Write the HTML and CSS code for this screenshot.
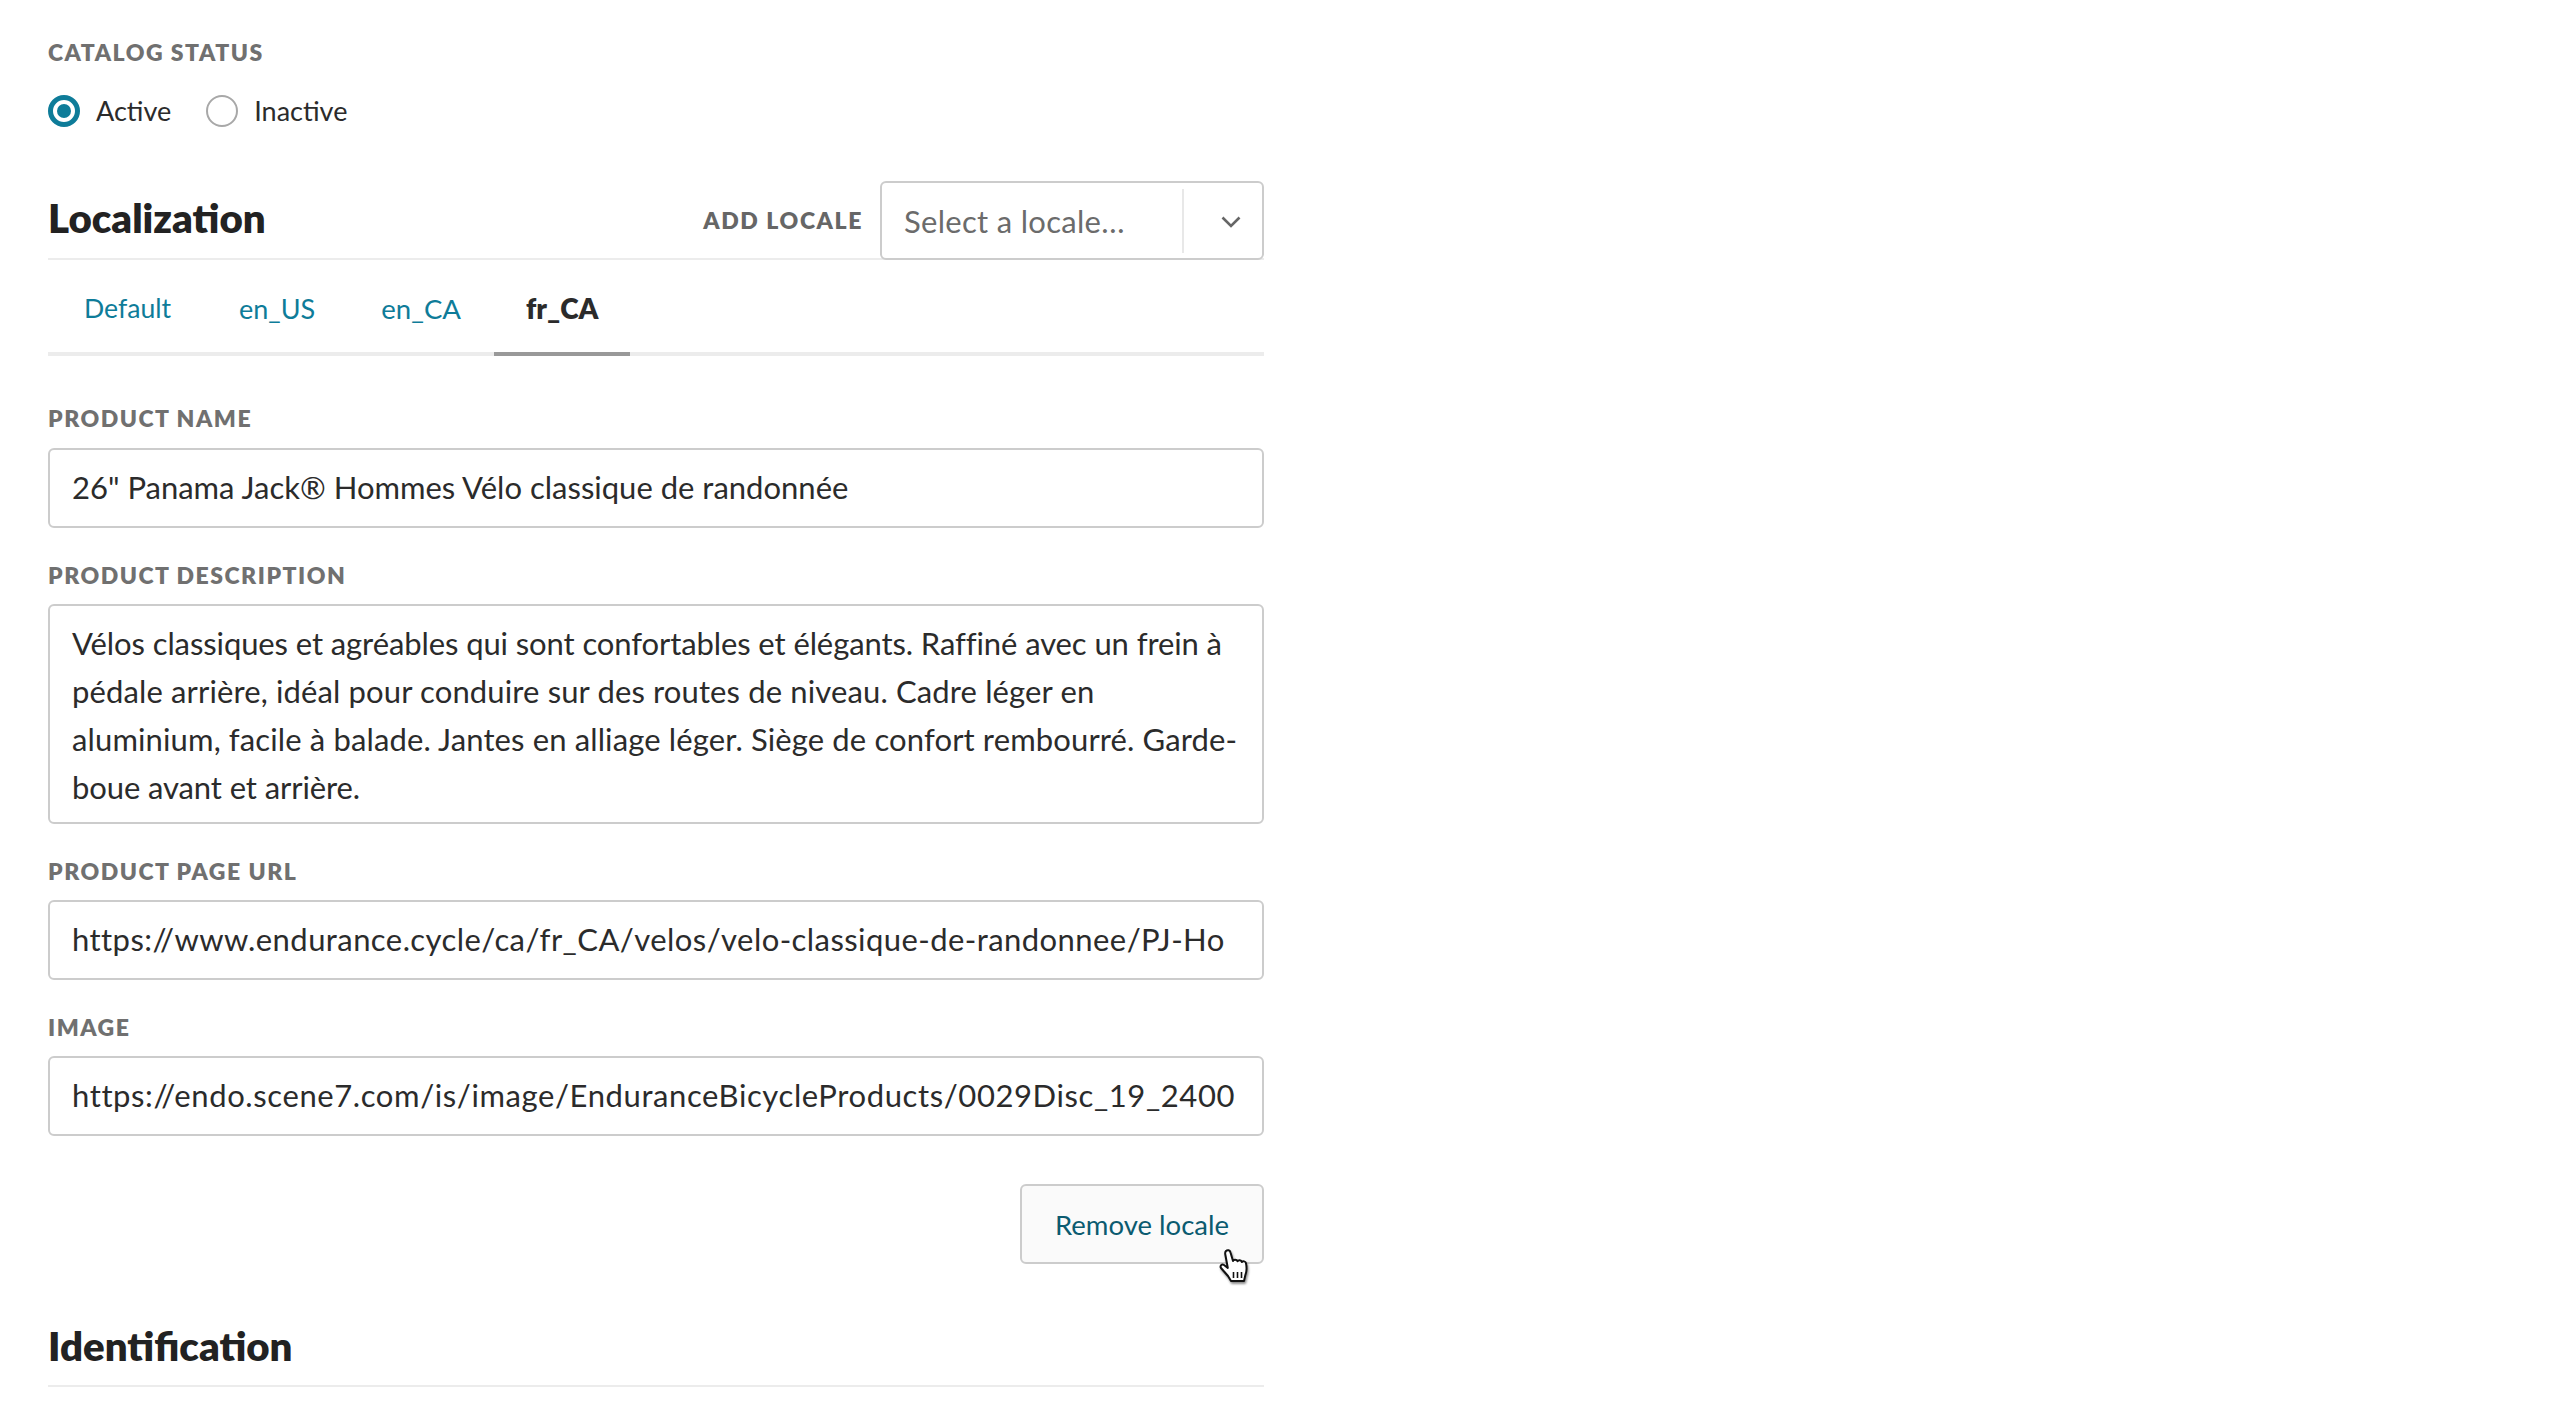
FILE: index.html
```html
<!DOCTYPE html>
<html lang="fr">
<head>
<meta charset="utf-8">
<title>Catalog</title>
<link rel="stylesheet" href="styles.css">
</head>
<body>
<main class="page">
  <div class="label status-label">CATALOG STATUS</div>
  <div class="radios">
    <div class="radio-item"><span class="radio on"></span><span>Active</span></div>
    <div class="radio-item"><span class="radio"></span><span>Inactive</span></div>
  </div>
  <header class="section-head loc-head">
    <h2>Localization</h2>
    <div class="add-locale">
      <span class="label add-label">ADD LOCALE</span>
      <div class="select">
        <span class="select-text">Select a locale…</span>
        <span class="select-arrow">
          <svg width="20" height="12" viewBox="0 0 20 12"><path d="M1.500 1.500 10 10l8.500-8.500" fill="none" stroke="#666" stroke-width="2.600"/></svg>
        </span>
      </div>
    </div>
  </header>
  <nav class="tabs">
    <a class="tab">Default</a>
    <a class="tab">en_US</a>
    <a class="tab en-ca">en_CA</a>
    <a class="tab active">fr_CA</a>
  </nav>
  <div class="label field-label first">PRODUCT NAME</div>
  <div class="input">26" Panama Jack® Hommes Vélo classique de randonnée</div>
  <div class="label field-label">PRODUCT DESCRIPTION</div>
  <div class="textarea"><span class="tight">Vélos classiques et agréables qui sont confortables et élégants. Raffiné avec un frein à</span><br>pédale arrière, idéal pour conduire sur des routes de niveau. Cadre léger en<br>aluminium, facile à balade. Jantes en alliage léger. Siège de confort rembourré. Garde-<br><span class="tight">boue avant et arrière.</span></div>
  <div class="label field-label">PRODUCT PAGE URL</div>
  <div class="input url">https://www.endurance.cycle/ca/fr_CA/velos/velo-classique-de-randonnee/PJ-Ho</div>
  <div class="label field-label">IMAGE</div>
  <div class="input image">https://endo.scene7.com/is/image/EnduranceBicycleProducts/0029Disc_19_2400</div>
  <div class="actions">
    <button class="btn">Remove locale</button>
    <svg class="cursor" width="34" height="38" viewBox="0 0 34 38">
      <path d="M8 3c1.500-1.500 4-.8 4.500 1.500L15 13c.5-1.800 3.800-1.800 4.500.3.800-1.500 3.800-1.300 4.300.7 1-1.200 3.800-.8 4.200 1.200.8 4 .6 9-.8 12.500L26 33H13l-3-5-7-8c-1.300-2 .8-4.500 3-3l3.800 3L7.300 6.500C7 5 7.200 3.800 8 3z" fill="#fff" stroke="#111" stroke-width="2" stroke-linejoin="round"/>
      <path d="M15.500 24v6M19.500 24v6M23.500 24v6" stroke="#111" stroke-width="1.600"/>
    </svg>
  </div>
  <header class="section-head id-head"><h2>Identification</h2></header>
</main>
</body>
</html>
```
FILE: styles.css
```css
* { box-sizing: border-box; }
html, body { margin: 0; background: #fff; }
body { font-family: Lato, "Liberation Sans", sans-serif; color: #2b2b2b; font-size: 29px; overflow: hidden; height: 1422px; }
.page { width: 1264px; padding: 38px 0 0 48px; }
.label { font-size: 23px; line-height: 28px; font-weight: 800; letter-spacing: 1.500px; color: #707070; }
.radios { display: flex; gap: 35px; margin-top: 29px; height: 32px; align-items: center; font-size: 27px; }
.radio-item { display: flex; align-items: center; gap: 16px; }
.radio-item span:last-child { position: relative; top: -1px; }
.radio { width: 32px; height: 32px; border-radius: 50%; border: 2px solid #a8a8a8; background: #fff; }
.radio.on { border: 5px solid #0e7c99; position: relative; }
.radio.on::after { content: ""; position: absolute; left: 4px; top: 4px; width: 14px; height: 14px; border-radius: 50%; background: #0e7c99; }
.section-head { display: flex; justify-content: space-between; align-items: center; border-bottom: 2px solid #ececec; }
h2 { margin: 0; font-size: 40.200px; font-weight: 800; color: #222; }
.loc-head { margin-top: 54px; height: 79px; }
.loc-head h2 { padding-bottom: 4px; }
.add-locale { display: flex; align-items: center; gap: 17px; }
.add-label { color: #666; letter-spacing: 1.600px; }
.select { display: flex; align-items: center; width: 384px; height: 79px; border: 2px solid #ccc; border-radius: 6px; margin-bottom: -2px; background: #fff; }
.select-text { flex: 1; padding-left: 22px; color: #6b6b6b; font-size: 31px; letter-spacing: 0.300px; }
.select-arrow { width: 80px; height: 64px; border-left: 2px solid #e8e8e8; display: flex; align-items: center; justify-content: center; padding: 2px 0 0 16px; }
.tabs { display: flex; height: 96px; border-bottom: 4px solid #ececec; font-size: 27px; }
.tab { color: #0e7c99; padding: 0 33px; display: flex; align-items: center; height: 96px; }
.tab:first-child { padding-left: 36px; padding-right: 35px; font-size: 26.600px; }
.tab.en-ca { font-size: 27.600px; }
.tab.active { color: #2b2b2b; font-size: 28px; font-weight: 800; border-bottom: 4px solid #999; padding-top: 4px; padding-left: 32px; padding-right: 32px; }
.field-label { margin-top: 33px; margin-bottom: 15px; height: 28px; }
.field-label.first { margin-top: 48px; margin-bottom: 16px; }
.input, .textarea { border: 2px solid #ccc; border-radius: 6px; padding: 0 22px; color: #2b2b2b; font-size: 31px; white-space: nowrap; overflow: hidden; }
.input { height: 80px; line-height: 75px; }
.input.url { letter-spacing: 0.430px; }
.input.image { letter-spacing: 0.600px; }
.textarea { height: 220px; padding-top: 13px; line-height: 48px; letter-spacing: 0.130px; }
.tight { letter-spacing: -0.100px; }
.actions { display: flex; justify-content: flex-end; margin-top: 48px; position: relative; }
.btn { width: 244px; height: 80px; border: 2px solid #ccc; border-radius: 6px; background: #fafafa; color: #0b5b70; font: 27.500px Lato, "Liberation Sans", sans-serif; }
.cursor { position: absolute; right: 12px; top: 64px; filter: drop-shadow(1px 2px 1px rgba(0,0,0,.45)); }
.id-head { margin-top: 42px; height: 81px; }
```
